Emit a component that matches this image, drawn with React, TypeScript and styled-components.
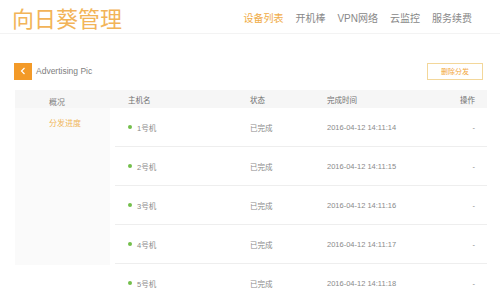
import React from 'react'
import styled, { createGlobalStyle } from 'styled-components'

const GlobalStyle = createGlobalStyle`
  html, body {
    margin: 0;
    padding: 0;
    background: #fff;
    font-family: 'Liberation Sans', 'Noto Sans CJK SC', sans-serif;
  }
`

const orange = '#f2a53a'

const Page = styled.div`
  width: 500px;
  height: 293px;
  overflow: hidden;
  background: #fff;
`

const TopBar = styled.header`
  height: 33px;
  display: flex;
  align-items: center;
  justify-content: space-between;
  padding: 0 28px 0 12px;
  border-bottom: 1px solid #f3f3f3;
`

const Brand = styled.h1`
  margin: 0;
  font-size: 22px;
  font-weight: 400;
  color: #f2b458;
`

const Nav = styled.nav`
  display: flex;
  gap: 12px;
  margin-top: 1px;
`

const NavItem = styled.span<{ $active?: boolean }>`
  font-size: 10px;
  color: ${p => (p.$active ? '#f0ab45' : '#888')};
`

const Toolbar = styled.div`
  display: flex;
  align-items: center;
  justify-content: space-between;
  padding: 28px 17px 0 14px;
  height: 18px;
`

const Crumb = styled.div`
  display: flex;
  align-items: center;
  gap: 4px;
  font-size: 8.5px;
  color: #808080;
`

const BackBtn = styled.span`
  width: 18px;
  height: 17px;
  background: #f39a28;
  display: flex;
  align-items: center;
  justify-content: center;
`

const GhostButton = styled.button`
  width: 56px;
  height: 17px;
  padding: 0;
  border: 1px solid #f3d79a;
  background: #fff;
  color: ${orange};
  font-family: inherit;
  font-size: 7px;
`

const Panel = styled.div`
  display: flex;
  margin: 10px 13px 0 15px;
`

const Sidebar = styled.aside`
  width: 95px;
  flex-shrink: 0;
  height: 175px;
  background: linear-gradient(#f6f6f6 0, #f6f6f6 18px, #fafafa 18px);
  display: flex;
  flex-direction: column;
  padding-top: 6px;
  box-sizing: border-box;
`

const SideItem = styled.div<{ $active?: boolean }>`
  font-size: 8px;
  padding-left: 34px;
  height: 21px;
  color: ${p => (p.$active ? '#f0b65a' : '#808080')};
`

const Table = styled.div`
  flex: 1;
`

const Row = styled.div<{ $head?: boolean }>`
  display: grid;
  grid-template-columns: 122px 77px 130px 1fr;
  align-items: center;
  height: ${p => (p.$head ? '18px' : '38px')};
  background: ${p => (p.$head ? '#f6f6f6' : '#fff')};
  border-bottom: ${p => (p.$head ? 'none' : '1px solid #eeeeee')};
  font-size: 7.5px;
  color: ${p => (p.$head ? '#707070' : '#8a8a8a')};
  margin-left: ${p => (p.$head ? '0' : '5px')};
  padding-left: ${p => (p.$head ? '18px' : '13px')};
`

const Host = styled.span`
  display: flex;
  align-items: center;
  gap: 5px;
`

const Dot = styled.span`
  width: 4px;
  height: 4px;
  border-radius: 50%;
  background: #73bf4b;
`

const Op = styled.span`
  text-align: right;
  padding-right: 12px;
`

const rows = [
  { name: '1号机', time: '2016-04-12 14:11:14' },
  { name: '2号机', time: '2016-04-12 14:11:15' },
  { name: '3号机', time: '2016-04-12 14:11:16' },
  { name: '4号机', time: '2016-04-12 14:11:17' },
  { name: '5号机', time: '2016-04-12 14:11:18' },
]

export default function App() {
  return (
    <Page>
      <GlobalStyle />
      <TopBar>
        <Brand>向日葵管理</Brand>
        <Nav>
          <NavItem $active>设备列表</NavItem>
          <NavItem>开机棒</NavItem>
          <NavItem>VPN网络</NavItem>
          <NavItem>云监控</NavItem>
          <NavItem>服务续费</NavItem>
        </Nav>
      </TopBar>
      <Toolbar>
        <Crumb>
          <BackBtn>
            <svg width='6' height='8' viewBox='0 0 6 8'>
              <path d='M4.5 1 L1.5 4 L4.5 7' fill='none' stroke='#fff' strokeWidth='1.2' />
            </svg>
          </BackBtn>
          Advertising Pic
        </Crumb>
        <GhostButton>删除分发</GhostButton>
      </Toolbar>
      <Panel>
        <Sidebar>
          <SideItem>概况</SideItem>
          <SideItem $active>分发进度</SideItem>
        </Sidebar>
        <Table>
          <Row $head>
            <span>主机名</span>
            <span>状态</span>
            <span>完成时间</span>
            <Op>操作</Op>
          </Row>
          {rows.map(r => (
            <Row key={r.name}>
              <Host><Dot />{r.name}</Host>
              <span>已完成</span>
              <span>{r.time}</span>
              <Op>-</Op>
            </Row>
          ))}
        </Table>
      </Panel>
    </Page>
  )
}
